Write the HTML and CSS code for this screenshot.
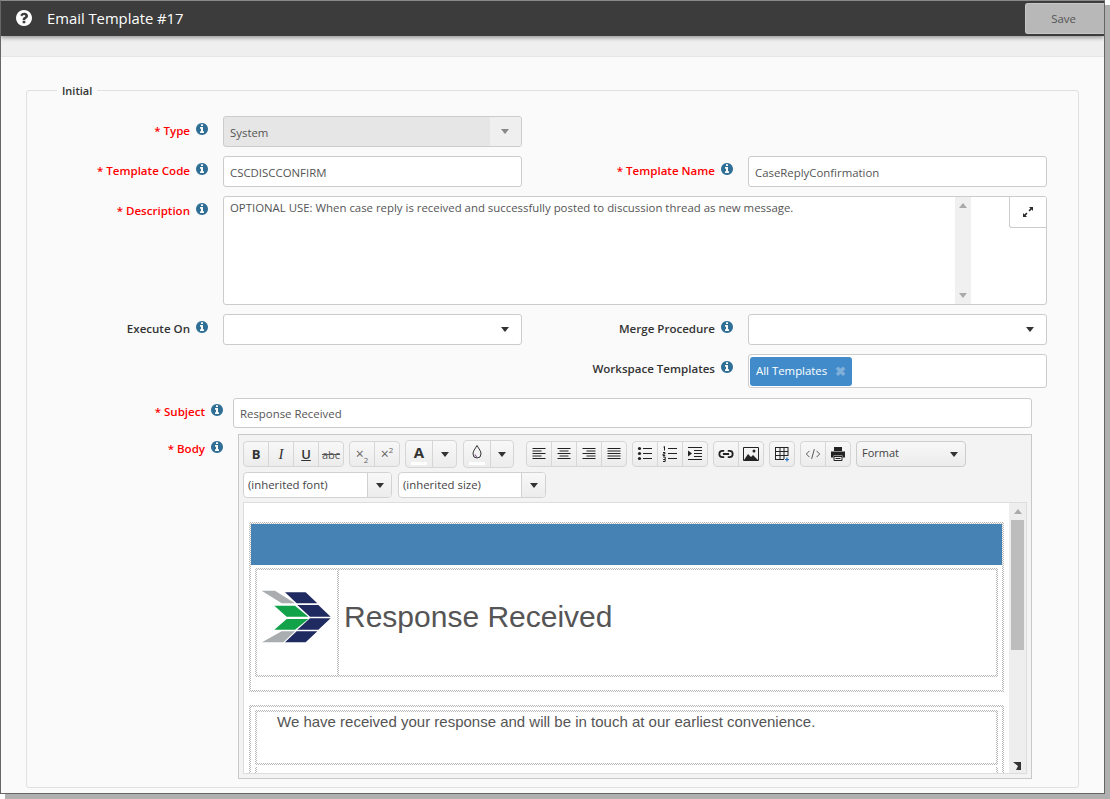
FILE: index.html
```html
<!DOCTYPE html>
<html lang="en">
<head>
<meta charset="utf-8">
<title>Email Template #17</title>
<link rel="stylesheet" href="styles.css">
</head>
<body>
<svg class="defs" aria-hidden="true">
  <symbol id="info" viewBox="128 128 1536 1536"><path d="M1152 1376v-160q0-14-9-23t-23-9h-96v-512q0-14-9-23t-23-9h-320q-14 0-23 9t-9 23v160q0 14 9 23t23 9h96v320h-96q-14 0-23 9t-9 23v160q0 14 9 23t23 9h448q14 0 23-9t9-23zm-128-896v-160q0-14-9-23t-23-9h-192q-14 0-23 9t-9 23v160q0 14 9 23t23 9h192q14 0 23-9t9-23zm640 416q0 209-103 385.500t-279.500 279.500-385.500 103-385.500-103-279.500-279.500-103-385.500 103-385.500 279.500-279.500 385.500-103 385.500 103 279.500 279.500 103 385.500z"/></symbol>
</svg>
<div class="window">
  <header class="titlebar">
    <svg class="help" viewBox="128 128 1536 1536"><path d="M1024 1376v-192q0-14-9-23t-23-9h-192q-14 0-23 9t-9 23v192q0 14 9 23t23 9h192q14 0 23-9t9-23zm256-672q0-88-55.500-163t-138.500-116-170-41q-243 0-371 213-15 24 8 42l132 100q7 6 19 6 16 0 25-12 53-68 86-92 34-24 86-24 48 0 85.500 26t37.500 59q0 38-20 61t-68 45q-63 28-115.500 86.500t-52.500 125.500v36q0 14 9 23t23 9h192q14 0 23-9t9-23q0-19 21.500-49.500t54.500-49.500q32-18 49-28.500t46-35 44.500-48 28-60.500 12.500-81zm384 192q0 209-103 385.500t-279.500 279.500-385.500 103-385.500-103-279.500-279.500-103-385.500 103-385.500 279.500-279.500 385.500-103 385.500 103 279.500 279.500 103 385.500z"/></svg>
    <h1 class="title">Email Template #17</h1>
    <button class="save" type="button">Save</button>
  </header>
  <div class="subbar"></div>
  <main class="content">
    <fieldset class="group">
      <legend class="legend">Initial</legend>
      <div class="grid">
        <label class="lbl req">* Type <svg class="i"><use href="#info"/></svg></label>
        <div class="box select disabled"><span class="val">System</span><span class="caret-cell"><span class="caret gray"></span></span></div>
        <span class="blank"></span><span class="blank"></span>

        <label class="lbl req">* Template Code <svg class="i"><use href="#info"/></svg></label>
        <div class="box"><span class="val">CSCDISCCONFIRM</span></div>
        <label class="lbl req">* Template Name <svg class="i"><use href="#info"/></svg></label>
        <div class="box"><span class="val">CaseReplyConfirmation</span></div>

        <label class="lbl req">* Description <svg class="i"><use href="#info"/></svg></label>
        <div class="box area span3">
          <span class="area-text">OPTIONAL USE: When case reply is received and successfully posted to discussion thread as new message.</span>
          <div class="vscroll"><span class="arr up"></span><span class="arr down"></span></div>
          <button class="expand" type="button" aria-label="Expand">
            <svg viewBox="0 0 12 12" width="12" height="12"><path d="M7 1h4v4l-1.400-1.400-1.900 1.900-1.200-1.200 1.900-1.900zM5 11H1V7l1.400 1.400 1.900-1.900 1.200 1.200-1.900 1.900z" fill="#2b2b2b"/></svg>
          </button>
        </div>

        <label class="lbl">Execute On <svg class="i"><use href="#info"/></svg></label>
        <div class="box select"><span class="val"></span><span class="caret-cell"><span class="caret"></span></span></div>
        <label class="lbl">Merge Procedure <svg class="i"><use href="#info"/></svg></label>
        <div class="box select"><span class="val"></span><span class="caret-cell"><span class="caret"></span></span></div>

        <span class="blank"></span><span class="blank"></span>
        <label class="lbl">Workspace Templates <svg class="i"><use href="#info"/></svg></label>
        <div class="box multi"><span class="chip">All Templates <span class="chip-x">✖</span></span></div>
      </div>

      <div class="subject-row">
        <label class="lbl req subj">* Subject <svg class="i"><use href="#info"/></svg></label>
        <div class="box subj-box"><span class="val">Response Received</span></div>
      </div>

      <div class="body-row">
        <label class="lbl req bodyl">* Body <svg class="i"><use href="#info"/></svg></label>
        <div class="editor">
          <div class="toolbar">
            <div class="tg">
              <button class="tb bold" type="button">B</button>
              <button class="tb ital" type="button">I</button>
              <button class="tb under" type="button">U</button>
              <button class="tb strike" type="button">abc</button>
            </div>
            <div class="tg">
              <button class="tb sc" type="button"><span>×<sub>2</sub></span></button>
              <button class="tb sc" type="button"><span>×<sup>2</sup></span></button>
            </div>
            <div class="tg big">
              <button class="tb wide colorb" type="button">A<span class="swatch"></span></button>
              <button class="tb arrow" type="button"><span class="caret"></span></button>
            </div>
            <div class="tg big g6">
              <button class="tb wide colorb" type="button">
                <svg viewBox="0 0 14 16" width="14" height="16"><path d="M7 1.500C5 5 3 7 3 10a4 4 0 0 0 8 0C11 7 9 5 7 1.500z" fill="none" stroke="#333"/><path d="M5 10.500a2 2 0 0 0 2 2" fill="none" stroke="#7a4a8a"/></svg>
                <span class="swatch"></span>
              </button>
              <button class="tb arrow" type="button"><span class="caret"></span></button>
            </div>
            <div class="tg g12">
              <button class="tb" type="button"><svg class="ic" viewBox="0 0 16 16"><path d="M1.500 2.500h13M1.500 5h9M1.500 7.500h13M1.500 10h9M1.500 12.500h13"/></svg></button>
              <button class="tb" type="button"><svg class="ic" viewBox="0 0 16 16"><path d="M1.500 2.500h13M3.500 5h9M1.500 7.500h13M3.500 10h9M1.500 12.500h13"/></svg></button>
              <button class="tb" type="button"><svg class="ic" viewBox="0 0 16 16"><path d="M1.500 2.500h13M5.500 5h9M1.500 7.500h13M5.500 10h9M1.500 12.500h13"/></svg></button>
              <button class="tb" type="button"><svg class="ic" viewBox="0 0 16 16"><path d="M1.500 2.500h13M1.500 5h13M1.500 7.500h13M1.500 10h13M1.500 12.500h13"/></svg></button>
            </div>
            <div class="tg">
              <button class="tb" type="button"><svg class="ic" viewBox="0 0 16 16"><path d="M6 2.500h9M6 7.500h9M6 12.500h9"/><g class="solid"><circle cx="2.500" cy="2.500" r="1.600"/><circle cx="2.500" cy="7.500" r="1.600"/><circle cx="2.500" cy="12.500" r="1.600"/></g></svg></button>
              <button class="tb" type="button"><svg class="ic" viewBox="0 0 16 16"><path d="M6 2.500h9M6 7.500h9M6 12.500h9M1.500 1l1-.5v4M1 6.500h2v1.500H1v1.500h2.200M1 11h2.200v2.500H1.200M3.200 13.500V15.500H1"/></svg></button>
              <button class="tb" type="button"><svg class="ic" viewBox="0 0 16 16"><path d="M1 1.500h14M7 4.500h8M7 7.500h8M7 10.500h8M1 13.500h14"/><path class="solid" d="M1 4.500l4 3-4 3z"/></svg></button>
            </div>
            <div class="tg">
              <button class="tb" type="button"><svg class="ic" viewBox="0 0 18 12"><path class="thick" d="M7 2.500H5a3.500 3.500 0 0 0 0 7h2M11 2.500h2a3.500 3.500 0 0 1 0 7h-2M5.500 6h7"/></svg></button>
              <button class="tb" type="button"><svg class="ic" viewBox="0 0 16 14"><path d="M.500.500h15v13H.500z"/><path class="solid" d="M1 13l4-6 3 3 2-2 5 5z"/><circle class="solid" cx="11" cy="4" r="1.500"/></svg></button>
            </div>
            <div class="tg">
              <button class="tb" type="button"><svg class="ic" viewBox="0 0 16 16"><path d="M1.500 1v12M6 1v12M10 1v12M14 1v9M1 1.500h13M1 5.500h13M1 9.500h13M1 13.500h9"/><path class="blue" d="M13 11.500v4M11 13.500h4"/></svg></button>
            </div>
            <div class="tg">
              <button class="tb" type="button"><svg class="ic thin" viewBox="0 0 18 14"><path d="M5 3.500L1.500 7 5 10.500M13 3.500L16.500 7 13 10.500M10.500 1.500l-3 11"/></svg></button>
              <button class="tb" type="button"><svg class="ic" viewBox="0 0 16 16"><path class="solid" d="M4 1h8v4H4zM1 5.500h14v6h-2.500V9.500h-9v2H1z"/><path d="M4 10.500h8v4H4zM5.500 12.500h5"/></svg></button>
            </div>
            <div class="fmt"><span>Format</span><span class="caret"></span></div>
            <div class="sel w149"><span class="sel-text">(inherited font)</span><span class="sel-btn"><span class="caret"></span></span></div>
            <div class="sel w148"><span class="sel-text">(inherited size)</span><span class="sel-btn"><span class="caret"></span></span></div>
          </div>
          <div class="frame">
            <div class="page">
              <div class="tbl">
                <div class="banner"></div>
                <div class="tbl-in">
                  <div class="logo-cell">
                    <svg class="logo" viewBox="60 120 216 165">
                      <path fill="#a9adaf" d="M65 125h40l60 38h-40zM125 247h40l-35 33H66z"/>
                      <path fill="#1f2a60" d="M135 130h62l35 33h-62zM172 168h63l37 35h-62zM210 208h62l-37 34h-63zM170 247h62l-35 33h-62z"/>
                      <path fill="#12a24a" d="M103 170h62l40 33h-65zM140 210h65l-40 32h-62z"/>
                    </svg>
                  </div>
                  <div class="head-cell">Response Received</div>
                </div>
              </div>
              <div class="tbl second">
                <div class="msg">We have received your response and will be in touch at our earliest convenience.</div>
                <div class="msg-next"></div>
              </div>
            </div>
            <div class="fscroll"><span class="arr up"></span><span class="thumb"></span></div>
            <svg class="grip" viewBox="0 0 8 8"><path d="M0 0h8v8H3L5 4z" fill="#333"/></svg>
          </div>
        </div>
      </div>
    </fieldset>
  </main>
</div>
</body>
</html>
```

FILE: styles.css
```css
:root {
  --white: linear-gradient(#fff, #fff);
  --checker: repeating-conic-gradient(#b8b8b8 0 25%, #fff 0 50%);
}
* { box-sizing: border-box; }
html, body { margin: 0; padding: 0; height: 799px; overflow: hidden; background: #fff; }
body { font-family: "Open Sans", "Liberation Sans", sans-serif; font-size: 11.4px; color: #555; }
.defs { display: none; }

.window {
  width: 1105px; height: 794px;
  border: 1px solid #666; border-top-color: #8a8a8a;
  box-shadow: 5px 5px 0 #b0b0b0;
  background: #fafafa;
  display: flex; flex-direction: column;
  overflow: hidden;
}
.titlebar {
  position: relative; z-index: 1;
  height: 35px; flex: none;
  background: #3c3c3c;
  display: flex; align-items: center;
  padding: 0 0 1px 15px;
  box-shadow: 0 2px 4px rgba(0,0,0,.35);
}
.help { width: 16px; height: 16px; fill: #fff; flex: none; }
.title { margin: 0 0 0 15px; font-size: 14.8px; font-weight: 400; color: #fff; line-height: 20px; }
.save {
  margin-left: auto; align-self: flex-start; margin-top: 2px;
  width: 79px; height: 31px;
  background: #b8b8b8; color: #555;
  border: 1px solid #c6c6c6; border-right: 0; border-radius: 3px 0 0 3px;
  font: 11.4px "Open Sans", sans-serif; padding: 0 3px 0 0;
}
.subbar { height: 21px; flex: none; background: #efefef; border-bottom: 1px solid #e6e6e6; }
.content { flex: 1; padding: 24px 25px 0 25px; }

.group {
  margin: 0; padding: 0 0 8px; min-width: 0;
  border: 1px solid #e0e0e0; border-radius: 3px;
}
.legend {
  margin-left: 30px; padding: 2px 5px 0;
  font-size: 11px; font-weight: 600; color: #333; line-height: 16px;
}

.grid {
  display: grid;
  grid-template-columns: 196px 299px 226px 299px;
  grid-auto-rows: auto;
  row-gap: 9px;
  margin-top: 17px;
}
.lbl {
  display: block; text-align: right; padding-right: 15px;
  font-size: 11.55px; font-weight: 600; color: #333; line-height: 30px; white-space: nowrap;
}
.req { color: #f00; }
.i { width: 12px; height: 12px; fill: #2f6f96; margin-left: 3px; vertical-align: -1px; position: relative; top: -1px; }
.box {
  height: 31px; background: #fff;
  border: 1px solid #ccc; border-radius: 3px;
  display: flex; align-items: center;
  overflow: hidden;
}
.val { flex: 1; padding: 1px 0 0 6px; color: #555; }
.disabled { background: #e6e6e6; }
.caret-cell { width: 33px; height: 100%; display: flex; align-items: center; justify-content: center; }
.disabled .caret-cell { background: #efefef; width: 31px; padding-right: 2px; }
.caret { display: inline-block; width: 0; height: 0; border: 4px solid transparent; border-top: 5px solid #333; border-bottom: 0; }
.caret.gray { border-top-color: #888; }
.span3 { grid-column: span 3; }
.area { height: 109px; align-items: flex-start; position: relative; }
.area-text { width: 731px; padding: 3px 6px 0; color: #555; line-height: 16px; flex: none; }
.vscroll { width: 16px; height: 100%; background: #f0f0f0; flex: none; position: relative; }
.arr { position: absolute; left: 4px; width: 0; height: 0; border: 4px solid transparent; }
.arr.up { top: 6px; border-top: 0; border-bottom: 5px solid #aaa; }
.arr.down { bottom: 6px; border-bottom: 0; border-top: 5px solid #aaa; }
.expand {
  margin-left: auto; width: 37px; height: 31px; flex: none;
  background: #fff; border: 0; border-left: 1px solid #ccc; border-bottom: 1px solid #ccc;
  border-radius: 0 0 0 3px; padding: 0;
  display: flex; align-items: center; justify-content: center;
}
.multi { height: 34px; padding-left: 1px; }
.chip {
  height: 29px; width: 102px; background: #428bca; color: #fff; border-radius: 3px;
  display: flex; align-items: center; justify-content: space-between; padding: 0 6px 1px;
}
.chip-x { color: #7fb0da; font-size: 13px; font-weight: 700; }

.subject-row { display: flex; margin-top: 10px; }
.subj { width: 206px; padding-right: 10px; line-height: 28px; }
.subj-box { width: 799px; height: 30px; }
.subj-box .val { padding-top: 0; }
.body-row { display: flex; margin-top: 6px; }
.bodyl { width: 211px; padding-right: 15px; }

.editor {
  width: 794px; height: 345px;
  background: #f3f3f3;
  border: 1px solid #c8c8c8;
  padding: 6px 4px 4px;
  display: flex; flex-direction: column; gap: 4px;
}
.toolbar { display: flex; flex-wrap: wrap; gap: 4px 5px; align-items: flex-start; }
.tg {
  display: flex; height: 26px;
  background: linear-gradient(#f8f8f8, #ececec);
  border: 1px solid #d6d6d6; border-radius: 4px;
  overflow: hidden;
}
.tg.big { height: 28px; margin-top: -1px; }
.g6 { margin-left: 1px; }
.g6 .arrow { width: 23px; }
.g12 { margin-left: 7px; }
.tb {
  width: 25px; height: 100%; padding: 0; border: 0; border-left: 1px solid #d6d6d6;
  background: transparent; color: #333;
  display: flex; align-items: center; justify-content: center;
  font: 13px "Open Sans", sans-serif; position: relative;
}
.tb:first-child { border-left: 0; width: 24px; }
.bold { font-weight: 700; font-size: 13px; }
.ital { font-family: "Liberation Serif", serif; font-style: italic; font-size: 15px; }
.under { text-decoration: underline; font-weight: 600; }
.strike { text-decoration: line-through; font-size: 11px; color: #555; }
.sc { color: #666; font-size: 14px; line-height: 1; }
.sc sub, .sc sup { font-size: 8px; line-height: 0; }
.tb.wide { width: 26px; font-weight: 700; font-size: 15px; padding-bottom: 4px; }
.arrow { width: 24px; }
.swatch { position: absolute; left: 5px; bottom: 2px; width: 16px; height: 3px; background: #fff; }
.ic { width: 16px; height: 16px; fill: none; stroke: #222; stroke-width: 1; }
.ic .solid { fill: #222; stroke: none; }
.ic .thick { stroke-width: 2; }
.ic.thin { stroke: #444; }
.ic .blue { stroke: #1f6fb8; stroke-width: 1.200; }
.fmt {
  width: 110px; height: 26px;
  background: linear-gradient(#f8f8f8, #ececec);
  border: 1px solid #ccc; border-radius: 4px;
  display: flex; align-items: center; justify-content: space-between;
  padding: 0 7px 3px 5px; color: #444; font-size: 11px;
}
.fmt .caret { margin-top: 3px; }
.sel {
  height: 26px; background: #fff;
  border: 1px solid #d2d2d2; border-radius: 4px;
  display: flex; overflow: hidden; color: #444;
}
.w149 { width: 149px; }
.w148 { width: 148px; margin-left: 1px; }
.sel-text { flex: 1; padding-left: 4px; line-height: 24px; font-size: 11.4px; }
.sel-btn {
  width: 24px; border-left: 1px solid #d2d2d2;
  background: linear-gradient(#f8f8f8, #ececec);
  display: flex; align-items: center; justify-content: center;
}

.frame {
  position: relative; flex: 1; min-height: 0;
  background: #fff; border: 1px solid #ddd;
  display: flex; overflow: hidden;
}
.page { flex: 1; min-width: 0; padding: 19px 5px 0 5px; font-family: "Liberation Sans", Arial, sans-serif; color: #555; }
.tbl, .tbl-in, .msg, .logo-cell, .msg-next {
  border-style: solid; border-color: transparent; border-width: 2px;
  background:
    var(--white) padding-box,
    var(--checker) 0 0 / 2px 2px border-box;
}
.tbl { height: 170px; }
.banner { height: 41px; background: #4682b4; }
.tbl-in { margin: 3px 4px 0; height: 109px; display: flex; }
.logo-cell { width: 82px; border-width: 0 2px 0 0; display: flex; align-items: center; justify-content: center; padding: 0 2px 12px 0; }
.logo { width: 72px; height: 55px; display: block; flex: none; }
.head-cell { padding-left: 5px; font-size: 30px; line-height: 94px; white-space: nowrap; }
.second { margin-top: 13px; height: auto; padding: 3px 4px 0; border-bottom-width: 0; }
.msg { height: 55px; padding: 1px 0 0 20px; font-size: 15px; line-height: 18px; white-space: nowrap; }
.msg-next { height: 12px; margin-top: 2px; border-width: 0 2px; }
.fscroll { width: 17px; flex: none; background: #eee; position: relative; }
.fscroll .arr.up { top: 6px; left: 5px; }
.thumb { position: absolute; top: 17px; left: 2px; width: 13px; height: 130px; background: #bdbdbd; }
.grip { position: absolute; right: 5px; bottom: 3px; width: 8px; height: 8px; }
```
